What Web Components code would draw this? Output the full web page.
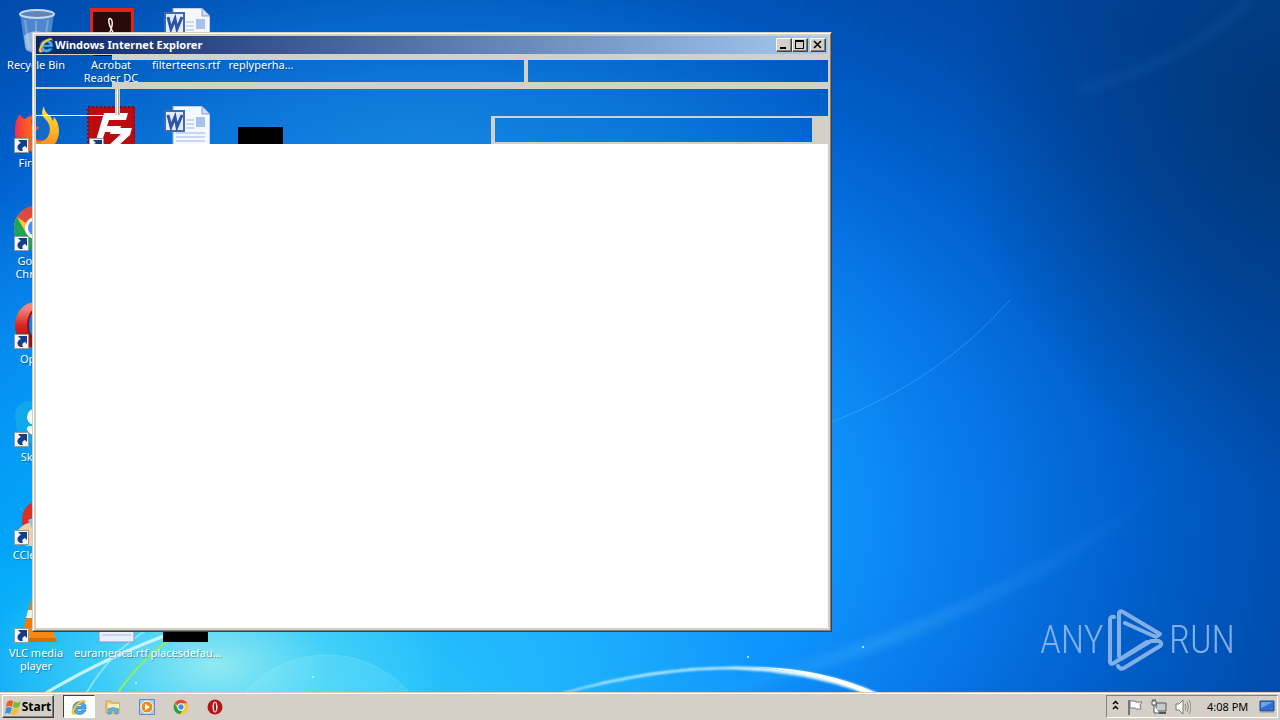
<!DOCTYPE html>
<html lang="en">
<head>
<meta charset="utf-8">
<title>Desktop</title>
<style>
html, body { margin: 0; height: 100%; }
body { font: 11px/13px "Noto Sans", "Open Sans", sans-serif; overflow: hidden; }
</style>
</head>
<body>
<win-desktop></win-desktop>
<script>
const define = (name, html, init) => customElements.define(name, class extends HTMLElement {
  connectedCallback() {
    if (this.shadowRoot) return;
    const root = this.attachShadow({ mode: 'open' });
    root.innerHTML = html;
    if (init) init(this, root);
  }
});

const svg = (size, body) => `<svg viewBox="0 0 ${size} ${size}" aria-hidden="true">${body}</svg>`;

const IE = svg(48, `<path d="M45 30H17c0 4 4 7 9 7 3 0 6-1 7-3h11c-3 7-9 12-18 12C14 46 6 38 6 27S14 8 26 8s20 9 19 22zM17 23h17c0-4-4-7-8-7s-9 3-9 7z" fill="#45b0f4" stroke="#0b5cae" stroke-width="2"/><path d="M43 12C45 0 31 2 19 12 7 23-1 40 4 45c4 3 10 0 17-5-7 3-10 3-11 0-2-5 4-15 12-22S41 5 43 12z" fill="#f8d23c" stroke="#b98a12" stroke-width="1"/>`);

const CHROME = svg(48, `<circle cx="24" cy="24" r="22" fill="#f8c630"/><path d="M24 2a22 22 0 0 1 19 11H24a11 11 0 0 0-10 6L5 13A22 22 0 0 1 24 2z" fill="#dd4b3e"/><path d="M5 13l9 16a11 11 0 0 0 14 5l-7 12A22 22 0 0 1 5 13z" fill="#20a05a"/><circle cx="24" cy="24" r="11" fill="#fff"/><circle cx="24" cy="24" r="8" fill="#4a8cf0"/>`);

const OPERA = svg(48, `<defs><linearGradient id="o" x2="0" y2="1"><stop stop-color="#f4867a"/><stop offset=".5" stop-color="#dc2820"/><stop offset="1" stop-color="#9c0d10"/></linearGradient></defs><ellipse cx="24" cy="23" rx="15" ry="17" fill="none" stroke="url(#o)" stroke-width="12"/><ellipse cx="24" cy="23" rx="8" ry="15" fill="none" stroke="#8c1014" stroke-width="2"/>`);

const WORD = svg(48, `<path d="M11 0h29l8 8v40H11z" fill="#f4f8ff" stroke="#8ea6d4"/><path d="M40 0v8h8z" fill="#cfdcf4" stroke="#7f9ad0"/><path d="M24 14h8M24 18h8M24 22h8M14 27h29M14 31h29M14 35h29M14 39h29M14 43h29" stroke="#9db4e0"/><path d="M34 11h9v10h-9z" fill="#a9c0ea"/><path d="M3 5h19v20H3z" fill="#e4ecfc" stroke="#4468b4" stroke-width="2"/><path d="M6 9l3 12 4-10 2 10 5-12" fill="none" stroke="#2c55a8" stroke-width="3"/>`);

const ICONS = {
  bin: svg(48, `<path d="M8 6l5 34c5 5 20 5 24 0l5-34z" fill="#8db4e0" fill-opacity=".55"/><path d="M13 12l4 28M24 13v30M36 12l-4 28" stroke="#dcecff" stroke-opacity=".3" stroke-width="2"/><path d="M12 28c6-6 17-6 24-1l-2 15c-6 4-15 4-20 0z" fill="#d6e2f0" fill-opacity=".55"/><ellipse cx="25" cy="6" rx="17" ry="4" fill="#5c86bc" stroke="#c8d8ec" stroke-width="2"/>`),
  acrobat: svg(48, `<path d="M3 0h44v48H3z" fill="#e0251b"/><path d="M6 4h38v44H6z" fill="#2a090b"/><path d="M22 26c3-6 4-10 3-13-1-4-4-3-3 1 0 4 3 8 5 12" fill="none" stroke="#f6f0f0" stroke-width="1.500"/>`),
  word: WORD,
  blank: '',
  black: svg(48, `<path d="M1 21h45v25H1z" fill="#000"/>`),
  firefox: svg(48, `<defs><linearGradient id="f" x1="0" x2="1" y2="0"><stop stop-color="#f02c50"/><stop offset=".4" stop-color="#ff6020"/></linearGradient><linearGradient id="y" x2="0" y2="1"><stop stop-color="#ffe838"/><stop offset=".6" stop-color="#ffb020"/><stop offset="1" stop-color="#ff7a1c"/></linearGradient></defs><circle cx="26" cy="24" r="17" fill="#1468c8"/><path d="M3 27c0-7 0-13 5-19 1 3 3 4 5 5 2-2 5-3 8-3-2 4-2 7-1 9l7 2c-1 4-6 4-7 7 2 6 9 8 14 5l2 9c-4 3-8 4-11 4C13 46 3 38 3 27z" fill="url(#f)"/><path d="M32 0c-4 8-1 11 3 15 4 5 4 13-1 18-4 4-10 4-14 1 2 7 6 11 13 11 8-2 14-10 14-20 0-7-3-12-5-14l-1 4c-2-7-9-7-9-15z" fill="url(#y)"/>`),
  filezilla: svg(48, `<path d="M1 1h47v47H1z" fill="#b80c10"/><path d="M1 1h47v47H1z" fill="none" stroke="#8c080c" stroke-width="2" stroke-dasharray="2 2"/><path d="M17 7h24l-2 7H22l-2 6h14l-2 6H18l-5 15H7zM25 22h20l-2 7-12 11h10l-2 6H19l2-6 13-12H23z" fill="#fff"/>`),
  chrome: CHROME,
  opera: OPERA,
  skype: svg(48, `<circle cx="17" cy="15" r="14" fill="#10a8ea"/><circle cx="31" cy="33" r="14" fill="#10a8ea"/><circle cx="24" cy="24" r="20" fill="#10a8ea"/><path d="M34 14c-4-5-16-4-16 3 0 8 15 4 15 12 0 5-12 5-15 0" fill="none" stroke="#fff" stroke-width="6" stroke-linecap="round"/>`),
  ccleaner: svg(48, `<path d="M42 8C28-2 10 4 10 22c0 16 18 24 32 16l-5-9c-6 4-15 1-15-7s9-10 15-5z" fill="#d83228"/><path d="M2 40c2-8 10-16 20-16l14 20c-10 6-26 6-34-4z" fill="#f0cfa4"/><path d="M16 22l14-6 4 6-14 8z" fill="#8fc0e8"/>`),
  vlc: svg(48, `<path d="M20 2h8l9 32H11z" fill="#f07a10"/><path d="M16 14h16l2 8H14z" fill="#f0f0f0"/><path d="M8 32h32l5 14H3z" fill="#f58a12"/><path d="M5 42h38l2 4H3z" fill="#d86c08"/>`),
  doc: svg(48, `<path d="M12 0h35v46H12z" fill="#e8eefc" stroke="#7e98d0"/><path d="M15 34h29M15 39h29" stroke="#a8bce6"/>`)
};

define('desk-icon', `
<style>
:host { display: flex; flex-direction: column; align-items: center; gap: 2px; color: #fff; min-width: 0; }
.pic { position: relative; width: 48px; height: 48px; flex: none; }
.pic svg { display: block; width: 48px; height: 48px; }
.pic .arrow { position: absolute; left: 2px; bottom: 1px; width: 15px; height: 15px; }
.label { width: 76px; text-align: center; text-shadow: 1px 1px 1px rgba(0,20,70,.4); }
</style>
<div class="pic"></div><div class="label"><slot></slot></div>`, (host, root) => {
  const pic = root.querySelector('.pic');
  pic.innerHTML = ICONS[host.getAttribute('icon')] + (host.hasAttribute('shortcut')
    ? `<svg class="arrow" viewBox="0 0 15 15" aria-hidden="true"><path d="M.5.5h14v14H.5z" fill="#f4f8fc" stroke="#9a9a9a"/><path d="M4 2h9v8l-2-2c-3 1-3 3-2 5H6C2 11 3 6 7 5z" fill="#123f86"/></svg>` : '');
});

define('win-wallpaper', `
<style>
:host { display: block; overflow: hidden;
  background:
    radial-gradient(ellipse 230px 130px at 215px 665px, rgba(165,240,240,.85), rgba(90,220,245,.55) 50%, rgba(60,200,250,0)),
    radial-gradient(ellipse 480px 220px at 300px 720px, rgba(50,215,250,.85), rgba(40,190,250,0)),
    radial-gradient(ellipse 420px 400px at 20px 590px, rgba(0,172,250,.9), rgba(0,160,245,0)),
    radial-gradient(ellipse 420px 200px at 420px 150px, rgba(28,140,216,.6), rgba(20,130,210,0)),
    radial-gradient(ellipse 330px 380px at 1290px 110px, rgba(0,52,112,.85), rgba(0,60,140,0)),
    radial-gradient(ellipse 960px 680px at 460px 520px, #20b0ff 0, #0e94fc 38%, #0878e8 54%, #0060cc 70%, #004eb0 86%, #0046a2 100%); }
svg { display: block; width: 100%; height: 100%; }
</style>
<svg viewBox="0 0 1280 692" preserveAspectRatio="none" aria-hidden="true">
<defs><filter id="b"><feGaussianBlur stdDeviation="1"/></filter><filter id="c" x="-20%" y="-20%" width="140%" height="140%"><feGaussianBlur stdDeviation="5"/></filter>
<linearGradient id="g" x1="0" x2="1"><stop stop-color="#a0e8ff"/><stop offset=".5" stop-color="#d0f4ff"/><stop offset="1" stop-color="#fff"/></linearGradient>
<linearGradient id="s" gradientUnits="userSpaceOnUse" x1="680" x2="1160" y1="0" y2="0"><stop stop-color="#5cc0ff" stop-opacity="0"/><stop offset=".4" stop-color="#5cc0ff" stop-opacity=".28"/><stop offset="1" stop-color="#5cc0ff" stop-opacity="0"/></linearGradient></defs>
<circle cx="327" cy="764" r="109" fill="#bff" fill-opacity=".12" stroke="#cff" stroke-opacity=".15"/>
<path d="M680 700Q860 660 1000 590T1170 470" fill="none" stroke="url(#s)" stroke-width="12" filter="url(#c)"/>
<path d="M832 422Q940 380 1010 300" fill="none" stroke="#60b8ff" stroke-opacity=".4" stroke-width="1"/>
<path d="M1080 90Q1190 60 1250 0" fill="none" stroke="#4c90dc" stroke-opacity=".1" stroke-width="10" filter="url(#c)"/>
<path d="M563 693Q650 667 735 667T879 694L868 694Q805 671 735 669T563 693z" fill="url(#g)" stroke="#cdf3ff" stroke-width="1" filter="url(#b)"/>
<path d="M755 667Q825 668 878 694L866 694Q820 672 755 667z" fill="#fff"/>
<g fill="none" stroke-linecap="round"><path d="M44 694Q110 655 175 632" stroke="#d8fbff" stroke-opacity=".85" stroke-width="3"/><path d="M86 694Q108 655 145 631" stroke="#a8ecff" stroke-opacity=".7" stroke-width="2"/><path d="M117 694Q140 660 172 638" stroke="#8cf060" stroke-width="2"/></g>
<g fill="#bff"><circle cx="136" cy="683" r="1"/><circle cx="748" cy="657" r="1"/><circle cx="863" cy="647" r="1"/><circle cx="313" cy="677" r="1"/></g>
</svg>`);

define('ie-window', `
<style>
:host { box-sizing: border-box; display: flex; flex-direction: column; --face: #d4d0c8;
  border: 1px solid; border-color: var(--face) #404040 #404040 var(--face); }
.frame { flex: 1; display: flex; flex-direction: column; border: 1px solid; border-color: #fff #808080 #808080 #fff; }
.inner { flex: 1; display: flex; flex-direction: column; border: 2px solid var(--face); }
header { display: flex; align-items: center; height: 18px; padding: 0 2px; gap: 1px; background: linear-gradient(90deg, #0a246a, #a6caf0); color: #fff; border-bottom: 1px solid var(--face); }
header svg { width: 16px; height: 16px; flex: none; }
h1 { flex: 1; margin: 0; font-size: 11px; line-height: 18px; font-weight: 700; white-space: nowrap; }
.btns { display: flex; }
button { box-sizing: border-box; width: 16px; height: 14px; padding: 0; background: var(--face); border: 1px solid; border-color: #fff #404040 #404040 #fff; box-shadow: inset -1px -1px #808080; }
button:last-child { margin-left: 2px; }
button svg { display: block; width: 14px; height: 12px; }
.row { display: grid; }
.menu { grid-template-columns: 76px 416px 1fr; height: 34px; }
.menu > * { border: 0 solid var(--face); }
.menu > :nth-child(1) { border-bottom-width: 2px; }
.menu > :nth-child(2) { border-width: 5px 4px 7px 0; }
.menu > :nth-child(3) { border-width: 5px 0 7px; }
.address { grid-template-columns: 84px 1fr; height: 27px; }
.address > :first-child { border-bottom: 1px solid #fff; border-right: 1px solid var(--face); box-shadow: inset -1px 0 #98a0a8, inset -2px 0 #fff, inset -4px 0 var(--face); }
.tabs { grid-template-columns: 455px 1fr; height: 28px; }
.tabs > :last-child { border: solid var(--face); border-width: 2px 16px 2px 4px; }
main { flex: 1; background: #fff; }
</style>
<div class="frame"><div class="inner">
<header>${IE}<h1><slot></slot></h1><div class="btns">
<button aria-label="Minimize"><svg viewBox="0 0 14 12"><path d="M3 8h6v2H3z"/></svg></button>
<button aria-label="Maximize"><svg viewBox="0 0 14 12"><path fill-rule="evenodd" d="M2 1h9v9H2zm1 2v6h7V3z"/></svg></button>
<button aria-label="Close"><svg viewBox="0 0 14 12"><path d="M3 2l7 7M10 2L3 9" stroke="#000" stroke-width="1.6"/></svg></button>
</div></header>
<div class="row menu"><div></div><div></div><div></div></div>
<div class="row address"><div></div><div></div></div>
<div class="row tabs"><div></div><div></div></div>
<main></main>
</div></div>`);

define('any-run-mark', `
<style>
:host { display: flex; align-items: center; gap: 4px; color: #8fb8ea; opacity: .9; font: 300 38px/60px "Roboto Condensed", "Open Sans Condensed", "Liberation Sans Narrow", Roboto, sans-serif; }
span { width: 63px; text-align: center; }
svg { width: 58px; height: 64px; flex: none; }
</style>
<span>ANY</span>
<svg viewBox="0 0 58 64" fill="none" stroke="currentColor" stroke-width="4" stroke-linejoin="round" stroke-linecap="round" aria-hidden="true"><path d="M7 9Q3 8 3 12V54Q4 57 7 55L40 34M12 48V5Q13 2 16 4L53 26L49 29L18 15M11 58Q13 62 17 60L53 38Q56 35 52 33L44 33L14 51"/></svg>
<span>RUN</span>`);

define('task-bar', `
<style>
:host { display: flex; box-sizing: border-box; align-items: stretch; height: 28px; padding: 3px 2px 2px; background: #d4d0c8; box-shadow: inset 0 1px #d4d0c8, inset 0 2px #fff; color: #000; }
button { display: flex; align-items: center; justify-content: center; box-sizing: border-box; padding: 0; background: none; border: 0; font: inherit; color: inherit; }
.start { width: 52px; gap: 1px; font-weight: 700; font-size: 12px; border: 1px solid; border-color: #fff #404040 #404040 #fff; box-shadow: inset -1px -1px #808080; margin-right: 9px; }
nav { display: flex; gap: 2px; flex: 1; }
nav button { width: 32px; }
nav button.on { background: #fff; border: 1px solid; border-color: #404040 #fff #fff #404040; }
svg { display: block; width: 16px; height: 16px; }
.tray { display: flex; align-items: center; box-sizing: border-box; width: 172px; padding: 0 2px 0 5px; gap: 8px; border: 1px solid; border-color: #808080 #fff #fff #808080; }
.tray .up { width: 7px; }
time { margin-left: 8px; flex: 1; white-space: nowrap; }
</style>
<button class="start">${svg(16, '<path d="M2 3q3-3 6-1L7 8Q4 6 1 8z" fill="#ee5a24"/><path d="M9 2q3 3 7 0l-2 6q-3 2-6 0z" fill="#7cbb2c"/><path d="M1 9q3-2 6 0l-2 6q-3-2-5 0z" fill="#3c8fe0"/><path d="M8 9q3 2 6 0l-2 6q-3 2-6 0z" fill="#f6bf24"/>')}Start</button>
<nav aria-label="Quick launch">
<button class="on" aria-label="Internet Explorer">${IE}</button>
<button aria-label="Explorer">${svg(16, '<path d="M1 2h5l1 2h7v10H1z" fill="#f0d070" stroke="#c8a040"/><path d="M3 5h11v4H3z" fill="#fbf0b4"/><path d="M3 15v-5q5-3 10 0v5h-3v-3H6v3z" fill="#62b4e8" stroke="#3c88c0" stroke-width=".6"/>')}</button>
<button aria-label="Media Player">${svg(16, '<path d="M.5.5h15v15H.5z" fill="#a8ccf0" stroke="#5a8cc8"/><circle cx="8" cy="8" r="6" fill="#f58a14" stroke="#fff"/><path d="M6 4.500l5 3.500-5 3.500z" fill="#fff"/>')}</button>
<button aria-label="Chrome">${CHROME}</button>
<button aria-label="Opera">${svg(16, '<circle cx="8" cy="8" r="7.500" fill="#b81418"/><ellipse cx="8" cy="8" rx="2.500" ry="5.500" fill="#f8e8e8"/><ellipse cx="8" cy="8" rx="1" ry="4.500" fill="#a80c10"/>')}</button>
</nav>
<div class="tray">
<svg class="up" viewBox="0 0 7 16" fill="none" stroke="#000" stroke-width="1.500" aria-hidden="true"><path d="M1 5l2.500-2.500L6 5M1 10l2.500-2.500L6 10"/></svg>
${svg(16, '<path d="M2 1v15" stroke="#777" stroke-width="2"/><path d="M3 2h5l1 1h6l-2 3 1 4H9L8 9H3z" fill="#fff" stroke="#777"/>')}
${svg(16, '<path d="M5 4h10v8H5z" fill="#c4ccd0" stroke="#555"/><path d="M8 14h7" stroke="#555" stroke-width="2"/><path d="M1 2h4v4H1zM3 6v8h5M2 0v2M4 0v2" fill="#fff" stroke="#555"/>')}
${svg(16, '<path d="M1 5h3l4-4v14l-4-4H1z" fill="#fff" stroke="#777"/><path d="M10 5q2 3 0 6M12 3q3 5 0 10M14 1q4 7 0 14" fill="none" stroke="#888"/>')}
<time>4:08 PM</time>
${svg(16, '<path d="M1 2h14v10H1z" fill="#2f6fd0" stroke="#1c4a90"/><path d="M2 3h12L2 9z" fill="#6ca4ec"/><path d="M1 13h14" stroke="#8494a8"/>')}
</div>`);

const items = [
  ['bin', 'Recycle Bin'], ['firefox', 'Firefox', 1], ['chrome', 'Google Chrome', 1], ['opera', 'Opera', 1], ['skype', 'Skype', 1], ['ccleaner', 'CCleaner', 1], ['vlc', 'VLC media player', 1],
  ['acrobat', 'Acrobat Reader DC'], ['filezilla', '', 1], ['blank', ''], ['blank', ''], ['blank', ''], ['blank', ''], ['doc', 'euramerica.rtf'],
  ['word', 'filterteens.rtf'], ['word', ''], ['blank', ''], ['blank', ''], ['blank', ''], ['blank', ''], ['black', 'placesdefau...'],
  ['blank', 'replyperha...'], ['black', '']
];

define('win-desktop', `
<style>
:host { display: flex; flex-direction: column; height: 100vh; }
.area { position: relative; flex: 1; min-height: 0; }
win-wallpaper { position: absolute; inset: 0; }
.icons { position: relative; display: grid; grid-auto-flow: column; grid-template-rows: repeat(7, 98px); grid-auto-columns: 72px; column-gap: 3px; padding-top: 8px; height: 0; }
ie-window { position: absolute; left: 32px; top: 32px; width: 800px; height: 600px; }
any-run-mark { position: absolute; right: 48px; bottom: 20px; }
</style>
<div class="area">
<win-wallpaper></win-wallpaper>
<div class="icons">${items.map(([i, l, s]) => `<desk-icon icon="${i}"${s ? ' shortcut' : ''}>${l}</desk-icon>`).join('')}</div>
<any-run-mark></any-run-mark>
<ie-window>Windows Internet Explorer</ie-window>
</div>
<task-bar></task-bar>`);
</script>
</body>
</html>
